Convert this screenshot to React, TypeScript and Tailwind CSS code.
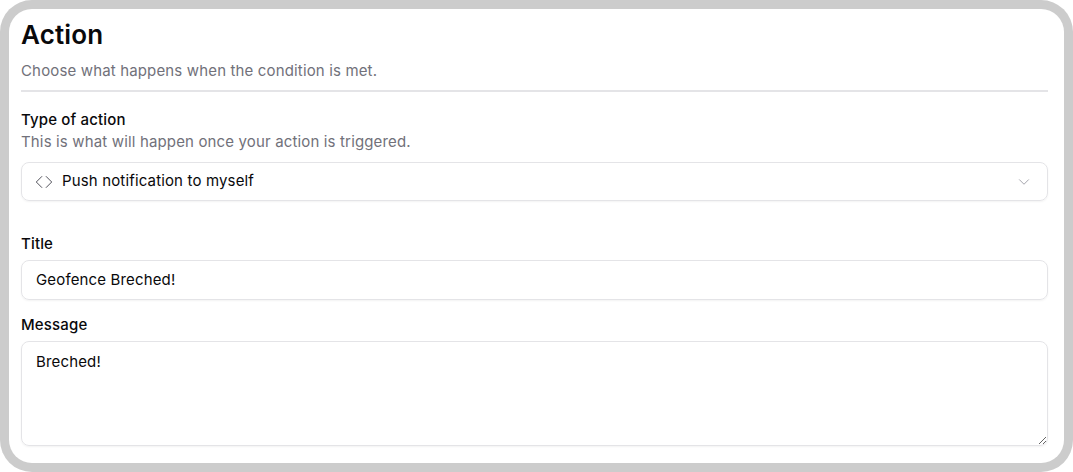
import React from "react";
import { ChevronDown } from "lucide-react";

export default function App() {
  return (
    <div className="w-[1073px] h-[472px] bg-white overflow-hidden font-['Inter',sans-serif]">
      <div className="w-full h-full bg-[#cccccc] rounded-[32px] p-[9px]">
        <div className="w-full h-full bg-white rounded-[23px] pl-[12px] pr-[16px] flex flex-col overflow-hidden">
          <h1 className="text-[26px] leading-[32px] tracking-[0.15px] font-semibold text-[#09090b] mt-[10px]">Action</h1>
          <p className="text-[15px] leading-[20px] tracking-[0.15px] text-[#71717a] mt-[10px]">Choose what happens when the condition is met.</p>
          <div className="h-[2px] bg-[#e4e4e7] mt-[9px]" />
          <div className="text-[15px] leading-[20px] tracking-[0.16px] font-[450] text-[#09090b] mt-[18px]">Type of action</div>
          <div className="text-[15px] leading-[20px] tracking-[0.15px] text-[#71717a] mt-[2px]">This is what will happen once your action is triggered.</div>
          <div className="h-[39px] mt-[10px] border border-[#e4e4e7] rounded-[8px] shadow-xs flex items-center pl-[13px] pr-[14px] text-[15px] tracking-[0.15px] text-[#09090b]">
            <svg width="18" height="14" viewBox="0 0 18 14" fill="none" stroke="#52525b" strokeWidth="1" strokeLinecap="round" strokeLinejoin="round" className="shrink-0 mr-[9px]">
              <path d="M6.8 1.5 1.3 7 6.8 12.5" />
              <path d="M11.2 1.5 16.7 7 11.2 12.5" />
            </svg>
            <span className="flex-1">Push notification to myself</span>
            <ChevronDown size={18} strokeWidth={1.3} className="text-[#a1a1aa]" />
          </div>
          <div className="text-[15px] leading-[20px] tracking-[0.16px] font-[450] text-[#09090b] mt-[33px]">Title</div>
          <div className="h-[40px] mt-[6px] border border-[#e4e4e7] rounded-[8px] shadow-xs flex items-center px-[14px] text-[15px] tracking-[0.15px] text-[#09090b]">Geofence Breched!</div>
          <div className="text-[15px] leading-[20px] tracking-[0.16px] font-[450] text-[#09090b] mt-[15px]">Message</div>
          <textarea readOnly defaultValue="Breched!" className="h-[105px] mt-[6px] border border-[#e4e4e7] rounded-[8px] shadow-xs px-[14px] pt-[10px] pb-[8px] text-[15px] tracking-[0.15px] leading-[20px] text-[#09090b] outline-none block w-full" />
        </div>
      </div>
    </div>
  );
}
